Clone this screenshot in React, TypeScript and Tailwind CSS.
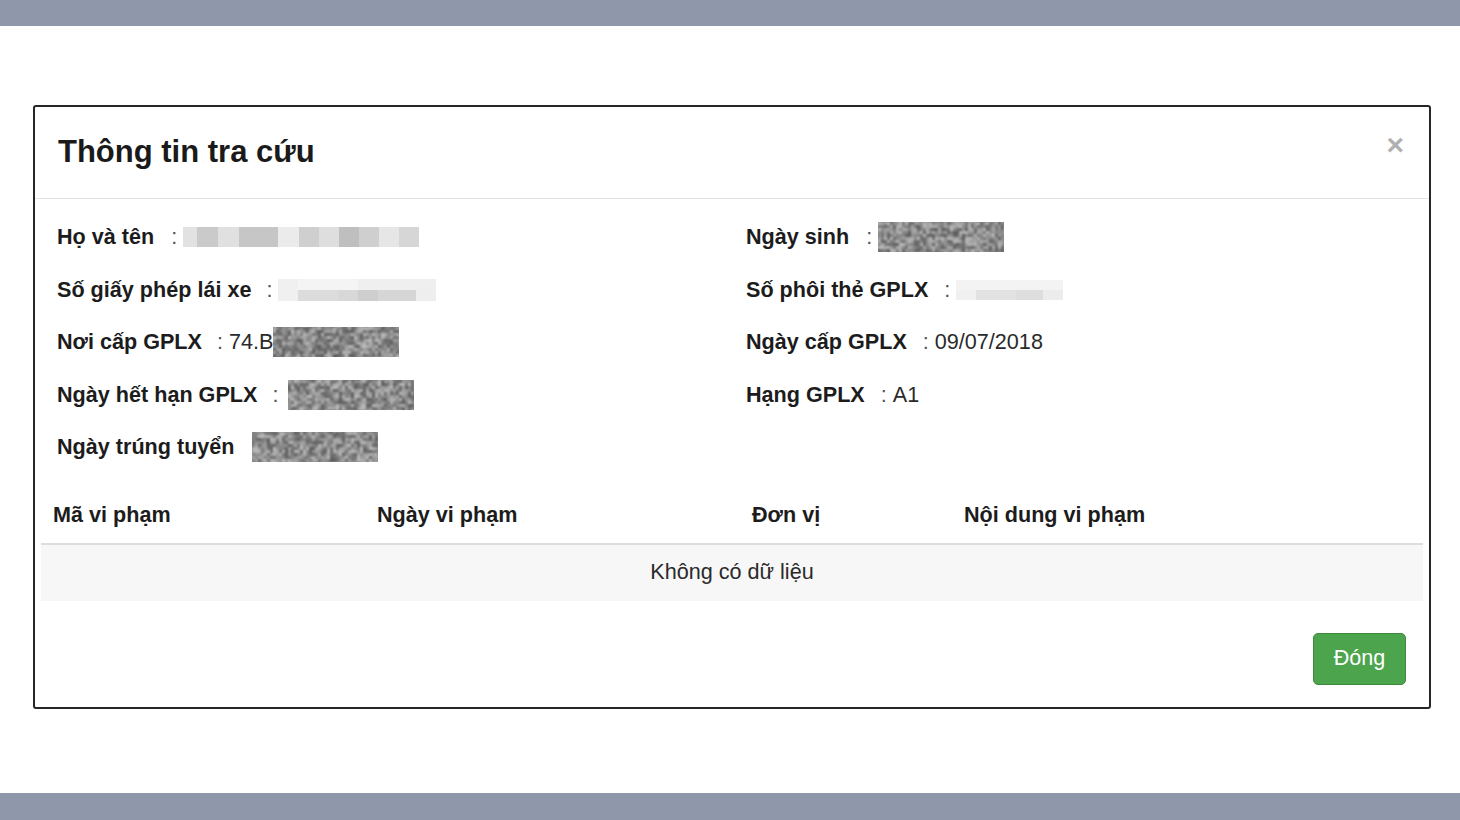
import type { ReactNode } from 'react'

const font = { fontFamily: '"Liberation Sans", Arial, sans-serif' }

function rand(seed: number) {
  let s = seed
  return () => {
    s = (s * 9301 + 49297) % 233280
    return s / 233280
  }
}

// blurred "redacted" block
function Noise({ w, h, seed }: { w: number; h: number; seed: number }) {
  const r = rand(seed)
  const size = 3
  const cols = Math.ceil(w / size) + 2
  const rows = Math.ceil(h / size) + 2
  const cells = Array.from({ length: cols * rows }, () => {
    const v = Math.round(90 + r() * 100)
    return `rgb(${v},${v},${v})`
  })
  return (
    <span className="inline-block overflow-hidden align-middle" style={{ width: w, height: h }}>
      <span
        className="-ml-[3px] -mt-[3px] grid blur-[1.3px]"
        style={{ gridTemplateColumns: `repeat(${cols}, ${size}px)`, width: cols * size, height: rows * size }}
      >
        {cells.map((c, i) => (
          <span key={i} style={{ background: c, height: size }} />
        ))}
      </span>
    </span>
  )
}

// pixelated light block
function Pixels({ blocks, h }: { blocks: [number, string][]; h: number }) {
  return (
    <span className="inline-flex align-middle" style={{ height: h }}>
      {blocks.map(([w, c], i) => (
        <span key={i} style={{ width: w, background: c }} />
      ))}
    </span>
  )
}

function Pixels2({ top, bottom, h }: { top: [number, string][]; bottom: [number, string][]; h: number }) {
  return (
    <span className="inline-flex flex-col align-middle" style={{ height: h }}>
      <Pixels blocks={top} h={h / 2} />
      <Pixels blocks={bottom} h={h / 2} />
    </span>
  )
}

function Field({ label, gap = 'ml-[15px]', colon = true, children }: { label: string; gap?: string; colon?: boolean; children?: ReactNode }) {
  return (
    <div className="flex h-[52.5px] items-center text-[21.6px] text-[#1c1c1c]">
      <span className="font-bold">{label}</span>
      {colon ? <span className={`${gap} mr-[6px] text-[#555]`}>:</span> : <span className="mr-[17px]" />}
      <span className="flex items-center text-[#2a2a2a]">{children}</span>
    </div>
  )
}

export default function App() {
  return (
    <div className="flex h-[820px] flex-col bg-white" style={font}>
      <div className="h-[26px] bg-[#8f97ab]" />
      <div className="flex-1 pl-[33px] pt-[79px]">
        <div className="flex h-[604px] w-[1398px] flex-col rounded-[3px] border-2 border-[#262626] bg-white">
          <div className="flex h-[92px] items-center justify-between border-b border-[#e3e3e3] pl-[23px] pr-[25px]">
            <h4 className="text-[31px] font-bold text-[#1a1a1a]">Thông tin tra cứu</h4>
            <span className="-mt-[16px] text-[30px] font-bold leading-none text-[#b0b0b0]">×</span>
          </div>

          <div className="grid grid-cols-[689px_1fr] pl-[22px] pt-[12px]">
            <div>
              <Field label="Họ và tên" gap="ml-[17px]">
                <Pixels
                  h={20}
                  blocks={[
                    [14, '#e2e2e2'],
                    [21, '#cacaca'],
                    [21, '#e0e0e0'],
                    [39, '#c6c6c6'],
                    [21, '#ebebeb'],
                    [20, '#cfcfcf'],
                    [20, '#dedede'],
                    [20, '#bfbfbf'],
                    [20, '#cfcfcf'],
                    [20, '#e6e6e6'],
                    [20, '#d6d6d6'],
                  ]}
                />
              </Field>
              <Field label="Số giấy phép lái xe">
                <Pixels2
                  h={22}
                  top={[
                    [20, '#f0f0f0'],
                    [60, '#f4f4f4'],
                    [78, '#efefef'],
                  ]}
                  bottom={[
                    [20, '#f0f0f0'],
                    [40, '#dcdcdc'],
                    [20, '#d8d8d8'],
                    [20, '#cecece'],
                    [38, '#d6d6d6'],
                    [20, '#eeeeee'],
                  ]}
                />
              </Field>
              <Field label="Nơi cấp GPLX" gap="ml-[15px]">
                <span>74.B</span>
                <Noise w={126} h={30} seed={7} />
              </Field>
              <Field label="Ngày hết hạn GPLX">
                <span className="ml-[4px]" />
                <Noise w={126} h={30} seed={19} />
              </Field>
              <Field label="Ngày trúng tuyển" colon={false}>
                <Noise w={126} h={30} seed={33} />
              </Field>
            </div>
            <div>
              <Field label="Ngày sinh" gap="ml-[17px]">
                <Noise w={126} h={30} seed={51} />
              </Field>
              <Field label="Số phôi thẻ GPLX" gap="ml-[16px]">
                <Pixels2
                  h={20}
                  top={[[107, '#f3f3f3']]}
                  bottom={[
                    [20, '#f0f0f0'],
                    [40, '#e2e2e2'],
                    [27, '#dedede'],
                    [20, '#ececec'],
                  ]}
                />
              </Field>
              <Field label="Ngày cấp GPLX" gap="ml-[16px]">
                09/07/2018
              </Field>
              <Field label="Hạng GPLX" gap="ml-[16px]">
                A1
              </Field>
            </div>
          </div>

          <div className="px-[6px] pt-[14px]">
            <div className="grid h-[57px] grid-cols-[324px_375px_212px_1fr] items-center border-b-2 border-[#dddddd] text-[21.6px] font-bold text-[#1c1c1c]">
              <div className="px-[12px]">Mã vi phạm</div>
              <div className="px-[12px]">Ngày vi phạm</div>
              <div className="px-[12px]">Đơn vị</div>
              <div className="px-[12px]">Nội dung vi phạm</div>
            </div>
            <div className="flex h-[56px] items-center justify-center bg-[#f7f7f7] text-[21.6px] text-[#2a2a2a]">
              Không có dữ liệu
            </div>
          </div>

          <div className="flex justify-end pr-[23px] pt-[32px]">
            <button
              type="button"
              className="h-[52px] w-[93px] rounded-[5px] border border-[#3d8a3d] bg-[#4ca44c] text-[21.6px] text-white"
            >
              Đóng
            </button>
          </div>
        </div>
      </div>
      <div className="h-[27px] bg-[#8f97ab]" />
    </div>
  )
}
